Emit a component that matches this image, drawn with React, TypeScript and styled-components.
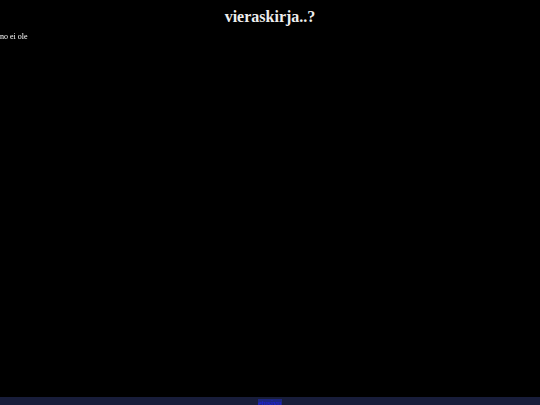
import styled, { createGlobalStyle } from "styled-components";

const GlobalStyle = createGlobalStyle`
  html, body {
    margin: 0;
    padding: 0;
    background: #000000;
    height: 100%;
  }
  #root {
    height: 100%;
  }
`;

const Page = styled.div`
  display: flex;
  flex-direction: column;
  height: 100vh;
  background: #000000;
  color: #eeeeee;
  font-family: "Liberation Serif", "Times New Roman", serif;
  overflow: hidden;
`;

const Content = styled.main`
  flex: 1;
  padding-top: 7px;
`;

const Title = styled.h1`
  margin: 0;
  text-align: center;
  font-size: 16px;
  font-weight: bold;
  line-height: 20px;
  color: #eeeeee;
`;

const Note = styled.p`
  margin: 5px 0 0 0;
  font-family: "Liberation Serif", "Times New Roman", serif;
  font-size: 8px;
  line-height: 10px;
  color: #ffffff;
  -webkit-font-smoothing: antialiased;
  will-change: transform;
`;

const Footer = styled.footer`
  height: 8px;
  background: #181d3a;
  display: flex;
  justify-content: center;
  align-items: flex-start;
  overflow: hidden;
`;

const FooterLink = styled.a`
  margin-top: 2px;
  font-family: "Liberation Serif", "Times New Roman", serif;
  font-size: 8px;
  line-height: 10px;
  color: #2020e0;
  background: #1c2680;
  padding: 0;
  text-decoration: none;
`;

export default function App() {
  return (
    <>
      <GlobalStyle />
      <Page>
        <Content>
          <Title>vieraskirja..?</Title>
          <Note>no ei ole</Note>
        </Content>
        <Footer>
          <FooterLink href="#">etusivu</FooterLink>
        </Footer>
      </Page>
    </>
  );
}
